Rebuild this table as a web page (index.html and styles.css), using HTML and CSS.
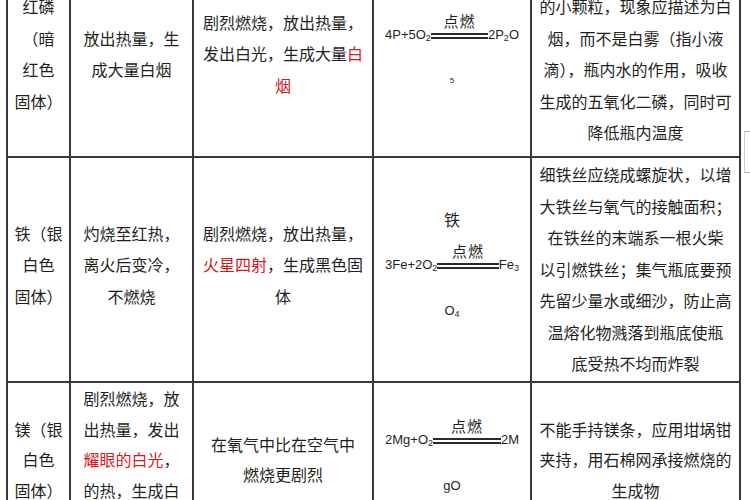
FILE: index.html
```html
<!DOCTYPE html>
<html lang="zh-CN">
<head>
<meta charset="utf-8">
<title>物质在氧气中燃烧</title>
<link rel="stylesheet" href="styles.css">
</head>
<body>
<div class="page">
  <table class="chem">
    <colgroup>
      <col class="w1"><col class="w2"><col class="w3"><col class="w4"><col class="w5">
    </colgroup>
    <tr class="r1">
      <td>红磷<br>（暗<br>红色<br>固体）</td>
      <td>放出热量，生<br>成大量白烟</td>
      <td>剧烈燃烧，放出热量，<br>发出白光，生成大量<span class="red">白<br>烟</span></td>
      <td class="formula">
        <div class="eq">
          <span class="tx">4P+5O<sub>2</sub></span>
          <span class="arrow"><span class="cond">点燃</span><span class="dbl"></span></span>
          <span class="tx">2P<sub>2</sub>O</span>
        </div>
        <div class="tail small">5</div>
      </td>
      <td class="note">生成物是五氧化二磷固体<br>的小颗粒，现象应描述为白<br>烟，而不是白雾（指小液<br>滴），瓶内水的作用，吸收<br>生成的五氧化二磷，同时可<br>降低瓶内温度</td>
    </tr>
    <tr class="r2">
      <td>铁（银<br>白色<br>固体）</td>
      <td>灼烧至红热，<br>离火后变冷，<br>不燃烧</td>
      <td>剧烈燃烧，放出热量，<br><span class="red">火星四射</span>，生成黑色固<br>体</td>
      <td class="formula">
        <div class="head">铁</div>
        <div class="eq">
          <span class="tx">3Fe+2O<sub>2</sub></span>
          <span class="arrow"><span class="cond">点燃</span><span class="dbl"></span></span>
          <span class="tx">Fe<sub>3</sub></span>
        </div>
        <div class="tail">O<sub>4</sub></div>
      </td>
      <td class="note">细铁丝应绕成螺旋状，以增<br>大铁丝与氧气的接触面积；<br>在铁丝的末端系一根火柴<br>以引燃铁丝；集气瓶底要预<br>先留少量水或细沙，防止高<br>温熔化物溅落到瓶底使瓶<br>底受热不均而炸裂</td>
    </tr>
    <tr class="r3">
      <td>镁（银<br>白色<br>固体）</td>
      <td>剧烈燃烧，放<br>出热量，发出<br><span class="red">耀眼的白光</span>，<br>的热，生成白<br>色固体</td>
      <td>在氧气中比在空气中<br>燃烧更剧烈</td>
      <td class="formula">
        <div class="eq">
          <span class="tx">2Mg+O<sub>2</sub></span>
          <span class="arrow"><span class="cond">点燃</span><span class="dbl"></span></span>
          <span class="tx">2M</span>
        </div>
        <div class="tail">gO</div>
      </td>
      <td class="note">不能手持镁条，应用坩埚钳<br>夹持，用石棉网承接燃烧的<br>生成物</td>
    </tr>
  </table>
  <div class="side"></div>
</div>
</body>
</html>
```
FILE: styles.css
```css
html, body {
  margin: 0;
  padding: 0;
  background: #ffffff;
}

.page {
  display: flex;
  align-items: flex-start;
  height: 500px;
  overflow: hidden;
}

.chem {
  margin: -50px 0 0 6px;
  border-collapse: collapse;
  table-layout: fixed;
  width: 735px;
  font-family: "Noto Sans CJK SC", "Noto Sans", sans-serif;
  font-size: 16px;
  line-height: 31.5px;
  color: #1f1f1f;
}

.w1 { width: 63px; }
.w2 { width: 123px; }
.w3 { width: 180px; }
.w4 { width: 158px; }
.w5 { width: 209px; }

.chem td {
  border: 2px solid #3a3a3a;
  padding: 0 4px;
  text-align: center;
  vertical-align: middle;
  white-space: nowrap;
  overflow: hidden;
}

.r1 { height: 206px; }
.r2 { height: 225px; }
.r2 td { padding-bottom: 9px; }
.r2 td.note { padding-bottom: 0; }
.r3 { height: 152px; }
.r3 td { line-height: 30.5px; padding-bottom: 6px; }

.red {
  color: #cf1a1f;
}

.chem td.formula {
  line-height: normal;
}

.eq {
  display: flex;
  align-items: flex-end;
  padding: 0 7px;
  font-family: "Liberation Sans", Arial, sans-serif;
  font-size: 13px;
  color: #1f1f1f;
}

.tx {
  line-height: 16px;
}

.tx sub, .tail sub {
  font-size: 9px;
  vertical-align: -2px;
  line-height: 0;
}

.arrow {
  flex: 1;
  display: flex;
  flex-direction: column;
  align-items: center;
  padding-bottom: 4px;
}

.cond {
  font-family: "Noto Sans CJK SC", sans-serif;
  font-size: 15px;
  line-height: 18px;
  margin-bottom: 3px;
  letter-spacing: 1px;
}

.dbl {
  align-self: stretch;
  height: 2px;
  border-top: 2px solid #2b2b2b;
  border-bottom: 2px solid #2b2b2b;
}

.head {
  line-height: 31.5px;
  margin-bottom: 6px;
}

.tail {
  margin-top: 22px;
  font-family: "Liberation Sans", Arial, sans-serif;
  font-size: 13px;
  line-height: 31.5px;
}

.tail.small {
  font-size: 8px;
}

.side {
  margin: 131px 0 0 3px;
  width: 6px;
  height: 40px;
  border-top: 1px solid #b0b0b0;
  border-bottom: 1px solid #b0b0b0;
  border-left: 1px solid #d0d0d0;
}
```
